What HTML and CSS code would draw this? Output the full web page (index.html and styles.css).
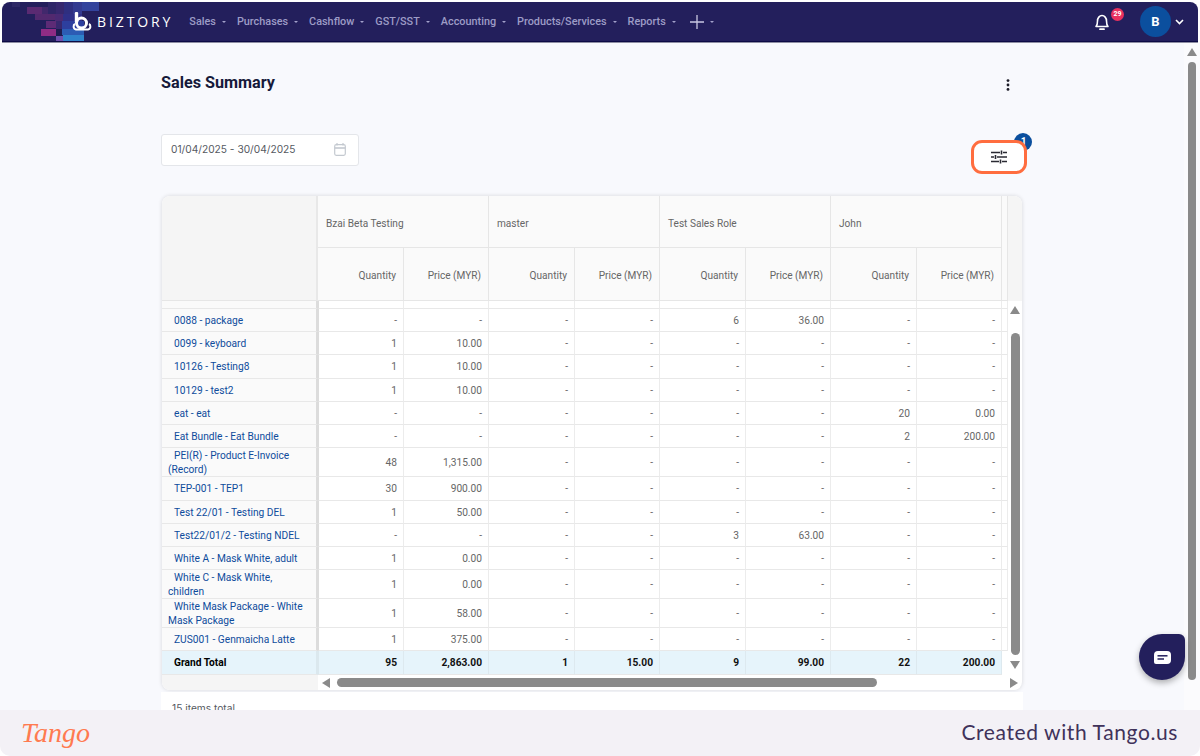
FILE: index.html
```html
<!DOCTYPE html>
<html lang="en">
<head>
<meta charset="utf-8">
<title>Sales Summary</title>
<link rel="stylesheet" href="styles.css">
</head>
<body>
<div class="shell">
  <header class="topbar">
    <svg class="mosaic" width="110" height="40" viewBox="0 0 110 40">
      <rect x="10" y="0" width="8" height="5" fill="#2d2865"/>
      <rect x="46" y="0" width="8" height="12" fill="#2f2668"/>
      <rect x="54" y="0" width="8" height="12" fill="#37286f"/>
      <rect x="62" y="0" width="9" height="12" fill="#2f2f80"/>
      <rect x="71" y="0" width="9" height="12" fill="#333a90"/>
      <rect x="80" y="0" width="17" height="9" fill="#33439c"/>
      <rect x="25" y="5" width="15" height="7" fill="#5a2a72"/>
      <rect x="40" y="5" width="6" height="7" fill="#41286c"/>
      <rect x="33" y="12" width="20" height="6" fill="#52296f"/>
      <rect x="53" y="12" width="8" height="7" fill="#4a2a74"/>
      <rect x="61" y="12" width="19" height="7" fill="#2f3088"/>
      <rect x="44" y="19" width="10" height="7" fill="#5d2b76"/>
      <rect x="54" y="19" width="6" height="8" fill="#38286e"/>
      <rect x="60" y="19" width="22" height="8" fill="#2d3f9e"/>
      <rect x="39" y="27" width="15" height="7" fill="#8f2c84"/>
      <rect x="54" y="27" width="6" height="7" fill="#1d1c4f"/>
      <rect x="60" y="27" width="22" height="6" fill="#2c5cb4"/>
      <rect x="54" y="34" width="7" height="6" fill="#6f4fae"/>
      <rect x="61" y="33" width="21" height="7" fill="#2f82cb"/>
    </svg>
    <a class="brand">
      <svg width="20" height="20" viewBox="0 0 20 20">
        <path d="M4.500 1.500V10" stroke="#fff" stroke-width="3.400" stroke-linecap="round" fill="none"/>
        <circle cx="9.500" cy="11" r="5" fill="none" stroke="#fff" stroke-width="3"/>
        <path d="M3 12c-2 1-2 5 1 5.500h12c3-.5 3-4.500 1-5.500" fill="none" stroke="#fff" stroke-width="2"/>
      </svg>
      <span class="brand-name">BIZTORY</span>
    </a>
    <nav class="menu">
      <a class="menu-item">Sales<i class="caret"></i></a>
      <a class="menu-item">Purchases<i class="caret"></i></a>
      <a class="menu-item">Cashflow<i class="caret"></i></a>
      <a class="menu-item">GST/SST<i class="caret"></i></a>
      <a class="menu-item">Accounting<i class="caret"></i></a>
      <a class="menu-item">Products/Services<i class="caret"></i></a>
      <a class="menu-item">Reports<i class="caret"></i></a>
      <a class="menu-item plus">
        <svg width="14" height="14" viewBox="0 0 14 14"><path d="M7 0v14M0 7h14" stroke="#c9c8e2" stroke-width="1.300"/></svg>
        <i class="caret"></i>
      </a>
    </nav>
    <div class="account">
      <div class="bell">
        <svg width="18" height="20" viewBox="0 0 18 20">
          <path d="M3 14.500c1.200-1.300 1.500-2.500 1.500-5.500 0-3 2-5.500 4.500-5.500s4.500 2.500 4.500 5.500c0 3 .3 4.200 1.500 5.500z" fill="none" stroke="#fff" stroke-width="1.600" stroke-linejoin="round"/>
          <path d="M7 17.200h4" stroke="#fff" stroke-width="1.800" stroke-linecap="round"/>
        </svg>
        <span class="bell-count">29</span>
      </div>
      <div class="avatar">B</div>
      <svg class="chev" width="9" height="6" viewBox="0 0 9 6"><path d="M1 1l3.500 3.500L8 1" fill="none" stroke="#fff" stroke-width="1.600"/></svg>
    </div>
  </header>

  <div class="viewport">
    <main class="content">
      <div class="title-row">
        <h1 class="title">Sales Summary</h1>
        <svg class="kebab" width="4" height="12" viewBox="0 0 4 12"><circle cx="2" cy="1.600" r="1.400"/><circle cx="2" cy="6" r="1.400"/><circle cx="2" cy="10.400" r="1.400"/></svg>
      </div>
      <div class="toolbar">
        <div class="date-field">
          <span>01/04/2025 - 30/04/2025</span>
          <svg width="12" height="13" viewBox="0 0 12 13"><rect x=".7" y="1.700" width="10.600" height="10.600" rx="1.500" fill="none" stroke="#c4c9d0" stroke-width="1.200"/><path d="M.7 5h10.600" stroke="#c4c9d0" stroke-width="1.600"/><path d="M3 0v2.500M9 0v2.500" stroke="#c4c9d0" stroke-width="1.200"/></svg>
        </div>
        <div class="filter-wrap">
          <span class="filter-badge">1</span>
          <button class="filter-btn">
            <svg width="16" height="14" viewBox="0 0 16 14">
              <path d="M0 2.500h9M12 2.500h4M0 7h3M6 7h10M0 11.500h8M11 11.500h5" stroke="#2a2a33" stroke-width="1.400"/>
              <path d="M10.500 .5v4M4.500 5v4M9.500 9.500v4" stroke="#2a2a33" stroke-width="1.600"/>
            </svg>
          </button>
        </div>
      </div>

      <section class="card">
        <div class="card-main">
          <table class="grid">
            <colgroup>
              <col class="c-name"><col class="c-a"><col class="c-b"><col class="c-a"><col class="c-b"><col class="c-a"><col class="c-b"><col class="c-a"><col class="c-b"><col class="c-rest">
            </colgroup>
            <thead>
              <tr class="h-top">
                <th class="corner" rowspan="2"></th>
                <th class="group" colspan="2">Bzai Beta Testing</th>
                <th class="group" colspan="2">master</th>
                <th class="group" colspan="2">Test Sales Role</th>
                <th class="group" colspan="2">John</th>
                <th class="group" rowspan="2"></th>
              </tr>
              <tr class="h-sub">
                <th>Quantity</th><th>Price (MYR)</th><th>Quantity</th><th>Price (MYR)</th><th>Quantity</th><th>Price (MYR)</th><th>Quantity</th><th>Price (MYR)</th>
              </tr>
            </thead>
            <tbody>
              <tr class="h8"><td class="name"></td><td></td><td></td><td></td><td></td><td></td><td></td><td></td><td></td><td></td></tr>
              <tr class="h23"><td class="name"><a>0088 - package</a></td><td>-</td><td>-</td><td>-</td><td>-</td><td>6</td><td>36.00</td><td>-</td><td>-</td><td></td></tr>
              <tr class="h23"><td class="name"><a>0099 - keyboard</a></td><td>1</td><td>10.00</td><td>-</td><td>-</td><td>-</td><td>-</td><td>-</td><td>-</td><td></td></tr>
              <tr class="h24"><td class="name"><a>10126 - Testing8</a></td><td>1</td><td>10.00</td><td>-</td><td>-</td><td>-</td><td>-</td><td>-</td><td>-</td><td></td></tr>
              <tr class="h23"><td class="name"><a>10129 - test2</a></td><td>1</td><td>10.00</td><td>-</td><td>-</td><td>-</td><td>-</td><td>-</td><td>-</td><td></td></tr>
              <tr class="h23"><td class="name"><a>eat - eat</a></td><td>-</td><td>-</td><td>-</td><td>-</td><td>-</td><td>-</td><td>20</td><td>0.00</td><td></td></tr>
              <tr class="h23"><td class="name"><a>Eat Bundle - Eat Bundle</a></td><td>-</td><td>-</td><td>-</td><td>-</td><td>-</td><td>-</td><td>2</td><td>200.00</td><td></td></tr>
              <tr class="h29"><td class="name"><a>PEI(R) - Product E-Invoice (Record)</a></td><td>48</td><td>1,315.00</td><td>-</td><td>-</td><td>-</td><td>-</td><td>-</td><td>-</td><td></td></tr>
              <tr class="h24"><td class="name"><a>TEP-001 - TEP1</a></td><td>30</td><td>900.00</td><td>-</td><td>-</td><td>-</td><td>-</td><td>-</td><td>-</td><td></td></tr>
              <tr class="h23"><td class="name"><a>Test 22/01 - Testing DEL</a></td><td>1</td><td>50.00</td><td>-</td><td>-</td><td>-</td><td>-</td><td>-</td><td>-</td><td></td></tr>
              <tr class="h23"><td class="name"><a>Test22/01/2 - Testing NDEL</a></td><td>-</td><td>-</td><td>-</td><td>-</td><td>3</td><td>63.00</td><td>-</td><td>-</td><td></td></tr>
              <tr class="h23"><td class="name"><a>White A - Mask White, adult</a></td><td>1</td><td>0.00</td><td>-</td><td>-</td><td>-</td><td>-</td><td>-</td><td>-</td><td></td></tr>
              <tr class="h29"><td class="name"><a>White C - Mask White, children</a></td><td>1</td><td>0.00</td><td>-</td><td>-</td><td>-</td><td>-</td><td>-</td><td>-</td><td></td></tr>
              <tr class="h29"><td class="name"><a>White Mask Package - White Mask Package</a></td><td>1</td><td>58.00</td><td>-</td><td>-</td><td>-</td><td>-</td><td>-</td><td>-</td><td></td></tr>
              <tr class="h23"><td class="name"><a>ZUS001 - Genmaicha Latte</a></td><td>1</td><td>375.00</td><td>-</td><td>-</td><td>-</td><td>-</td><td>-</td><td>-</td><td></td></tr>
            </tbody>
            <tfoot>
              <tr class="h24 total"><td class="name">Grand Total</td><td>95</td><td>2,863.00</td><td>1</td><td>15.00</td><td>9</td><td>99.00</td><td>22</td><td>200.00</td><td class="rest"></td></tr>
            </tfoot>
          </table>
          <div class="vscroll">
            <div class="vscroll-head"></div>
            <div class="vscroll-track">
              <i class="arrow up"></i>
              <i class="vthumb"></i>
              <i class="arrow down"></i>
            </div>
          </div>
        </div>
        <div class="hscroll">
          <div class="hscroll-fixed"></div>
          <div class="hscroll-track">
            <i class="arrow left"></i>
            <i class="hthumb"></i>
            <i class="arrow right"></i>
          </div>
        </div>
      </section>
      <div class="pager">15 items total</div>
    </main>
    <aside class="page-scroll">
      <i class="arrow up page-up"></i>
      <i class="page-thumb"></i>
    </aside>
    <button class="chat">
      <svg width="17" height="13" viewBox="0 0 17 13"><path d="M4 0h9a4 4 0 0 1 4 4v5a4 4 0 0 1-4 4H2a2 2 0 0 1-2-2V4a4 4 0 0 1 4-4z" fill="#fff"/><path d="M3.500 4.800h10" stroke="#231f5c" stroke-width="1.500"/><path d="M3.500 8h6.500" stroke="#231f5c" stroke-width="1.500"/></svg>
    </button>
  </div>
</div>
<footer class="tango">
  <span class="tango-logo">Tango</span>
  <span class="tango-note">Created with Tango.us</span>
</footer>
</body>
</html>
```
FILE: styles.css
```css
* { box-sizing: border-box; }
html, body { margin: 0; height: 756px; overflow: hidden; background: #fff; }
body { font-family: Roboto, "Liberation Sans", sans-serif; display: flex; flex-direction: column; }
a { color: inherit; text-decoration: none; }
i { display: block; }

.shell { height: 710px; padding: 2px 0 0 2px; display: flex; flex-direction: column; background: #fff; }

.topbar {
  height: 40px;
  flex: none;
  margin-right: 2px;
  background: #231f5c;
  border-bottom: 1px solid #0d0b45;
  border-radius: 8px 8px 0 0;
  display: flex;
  align-items: center;
  position: relative;
  overflow: hidden;
  box-shadow: 0 1px 0 #8e8ea3;
}
.mosaic { position: absolute; left: 0; top: 0; }
.brand { position: relative; display: flex; align-items: center; margin-left: 70px; gap: 5px; }
.brand-name { color: #fff; font-size: 14px; font-weight: 500; letter-spacing: 2.900px; font-family: "Open Sans", sans-serif; }
.menu { display: flex; align-items: center; margin-left: 16px; gap: 11px; }
.menu-item { display: flex; align-items: center; gap: 6px; color: #9d9cc6; font-size: 10.850px; font-weight: 500; }
.caret { width: 0; height: 0; border-left: 2.500px solid transparent; border-right: 2.500px solid transparent; border-top: 2.500px solid #a3a2cb; margin-top: 1px; }
.plus { margin-left: 3px; }
.account { margin-left: auto; display: flex; align-items: center; padding-right: 14px; }
.bell { position: relative; width: 18px; height: 20px; margin-right: 29px; }
.bell-count { position: absolute; left: 18px; top: -4px; width: 13px; height: 13px; border-radius: 50%; background: #e8305f; color: #fff; font-size: 7px; font-weight: 700; line-height: 13px; text-align: center; }
.avatar { width: 31px; height: 31px; border-radius: 50%; background: #0b4f9e; color: #fff; font-size: 13px; font-weight: 700; line-height: 31px; text-align: center; margin-right: 4px; }
.chev { display: block; }

.viewport { flex: 1; min-height: 0; position: relative; display: flex; background: #f8f9fd; margin-top: 1px; overflow: hidden; margin-left: -2px; }
.content { flex: 1; min-width: 0; padding: 26px 0 0 161px; }
.page-scroll { flex: none; width: 16px; background: #fbfbfd; display: flex; flex-direction: column; align-items: center; padding: 5px 1px 0 0; }
.page-thumb { width: 8px; height: 618px; margin-top: 6px; background: #8a8a8a; border-radius: 4px; }
.page-up { flex: none; }

.title-row { width: 862px; display: flex; justify-content: space-between; align-items: center; height: 26px; }
.title { margin: 0; font-family: Roboto, sans-serif; font-size: 16.200px; font-weight: 700; color: #161a3a; }
.kebab { fill: #1c1c28; margin-right: 13px; margin-top: 6px; }

.toolbar { width: 866px; display: flex; justify-content: space-between; margin-top: 39px; height: 40px; }
.date-field { width: 198px; height: 32px; background: #fff; border: 1px solid #e4e6ea; border-radius: 3px; display: flex; align-items: center; justify-content: space-between; padding: 0 12px 2px 9px; font-family: Inter, sans-serif; font-size: 10.200px; color: #55595f; }
.filter-wrap { position: relative; width: 56px; height: 34px; margin-top: 6px; }
.filter-btn { width: 100%; height: 100%; display: flex; align-items: center; justify-content: center; background: #fff; border: 3.500px solid #ff6d3f; border-radius: 11px; padding: 0; position: relative; }
.filter-badge { position: absolute; right: -5px; top: -7px; width: 18px; height: 18px; border-radius: 50%; background: #0b4f9e; color: #fff; font-size: 10px; font-weight: 700; line-height: 18px; text-align: center; padding-left: 1px; }

.card { width: 860px; margin: 22px 0 0 1px; background: #fff; border-radius: 8px; box-shadow: 0 0 4px rgba(0,0,0,.14); overflow: hidden; }
.card-main { display: flex; }
.grid { width: 846px; table-layout: fixed; border-collapse: separate; border-spacing: 0; font-size: 10.200px; flex: none; }
.c-name { width: 156px; }
.c-a { width: 86px; }
.c-b { width: 85px; }
.c-rest { width: 6px; }
.grid th { font-weight: 400; font-size: 10.100px; color: #666; background: #fafafa; border-right: 1px solid #e6e6e6; border-bottom: 1px solid #e6e6e6; padding: 2px 7px 0 8px; text-align: right; }
.h-top { height: 52px; }
.h-sub { height: 53px; }
.grid .group { text-align: left; padding-top: 3px; }
.grid .corner { background: #f5f5f5; border-right: 2px solid #e8e8e8; padding: 0; }
.grid td { padding: 1px 6px 0 8px; text-align: right; color: #666; border-right: 1px solid #ececec; border-bottom: 1px solid #e8e8e8; line-height: 14px; background: #fff; overflow: hidden; }
.grid td:last-child { padding: 0; }
.grid .name { text-align: left; background: #fafafa; padding: 1px 10px 0 6px; text-indent: 6px; border-right: 2px solid #dcdcdc; color: #0e4c9c; }
.grid .name + td { border-left: 1px solid #dcdcdc; }
.h8 { height: 8px; }
.grid .h8 td { line-height: 0; padding: 0; }
.h23 { height: 23px; }
.h24 { height: 24px; }
.h29 { height: 29px; }
.grid .h29 .name { line-height: 13.500px; }
.grid .total td { background: #e6f4fb; color: #111; font-weight: 700; border-right-color: #dde9ef; padding-top: 0; }
.grid .total .name { color: #000; border-right: 2px solid #dbe8ee; }
.grid .total .name + td { border-left-color: #dbe8ee; }
.grid .total .rest { background: #fff; border: 0; }

.vscroll { width: 14px; flex: none; display: flex; flex-direction: column; }
.vscroll-head { height: 105px; flex: none; background: #f5f5f5; }
.vscroll-track { flex: 1; display: flex; flex-direction: column; align-items: center; padding-top: 5px; }
.vthumb { width: 9px; height: 322px; margin-top: 19px; background: #8a8a8a; border-radius: 4.500px; }
.arrow { width: 0; height: 0; flex: none; }
.arrow.up { border-left: 5px solid transparent; border-right: 5px solid transparent; border-bottom: 8px solid #8a8a8a; }
.arrow.down { margin-top: 6px; border-left: 5px solid transparent; border-right: 5px solid transparent; border-top: 8px solid #8a8a8a; }
.arrow.left { border-top: 5px solid transparent; border-bottom: 5px solid transparent; border-right: 8px solid #8a8a8a; }
.arrow.right { margin-left: 133px; border-top: 5px solid transparent; border-bottom: 5px solid transparent; border-left: 8px solid #8a8a8a; }

.hscroll { display: flex; height: 15px; }
.hscroll-fixed { width: 156px; flex: none; background: #f5f5f5; }
.hscroll-track { flex: 1; display: flex; align-items: center; padding-left: 4px; }
.hthumb { width: 540px; height: 9px; margin-left: 7px; background: #8a8a8a; border-radius: 4.500px; }

.pager { width: 862px; margin-top: 2px; padding: 10px 11px 0; height: 40px; background: #fff; font-family: Inter, sans-serif; font-size: 10.200px; color: #55595f; }

.chat { position: absolute; left: 1139px; top: 591px; width: 46px; height: 46px; padding: 0; border: 0; background: #231f5c; border-radius: 50% 6px 50% 50%; box-shadow: 0 3px 6px rgba(0,0,0,.3); display: flex; align-items: center; justify-content: center; }

.tango { height: 46px; flex: none; background: #f3f1f6; border-radius: 0 0 10px 10px; display: flex; align-items: center; justify-content: space-between; padding: 0 22px 0 21px; }
.tango-logo { font-family: "Liberation Serif", serif; font-style: italic; font-size: 28px; color: #ff7a50; line-height: 1; }
.tango-note { font-family: Lato, sans-serif; font-size: 21px; letter-spacing: .6px; color: #40325a; padding-bottom: 4px; }
```
